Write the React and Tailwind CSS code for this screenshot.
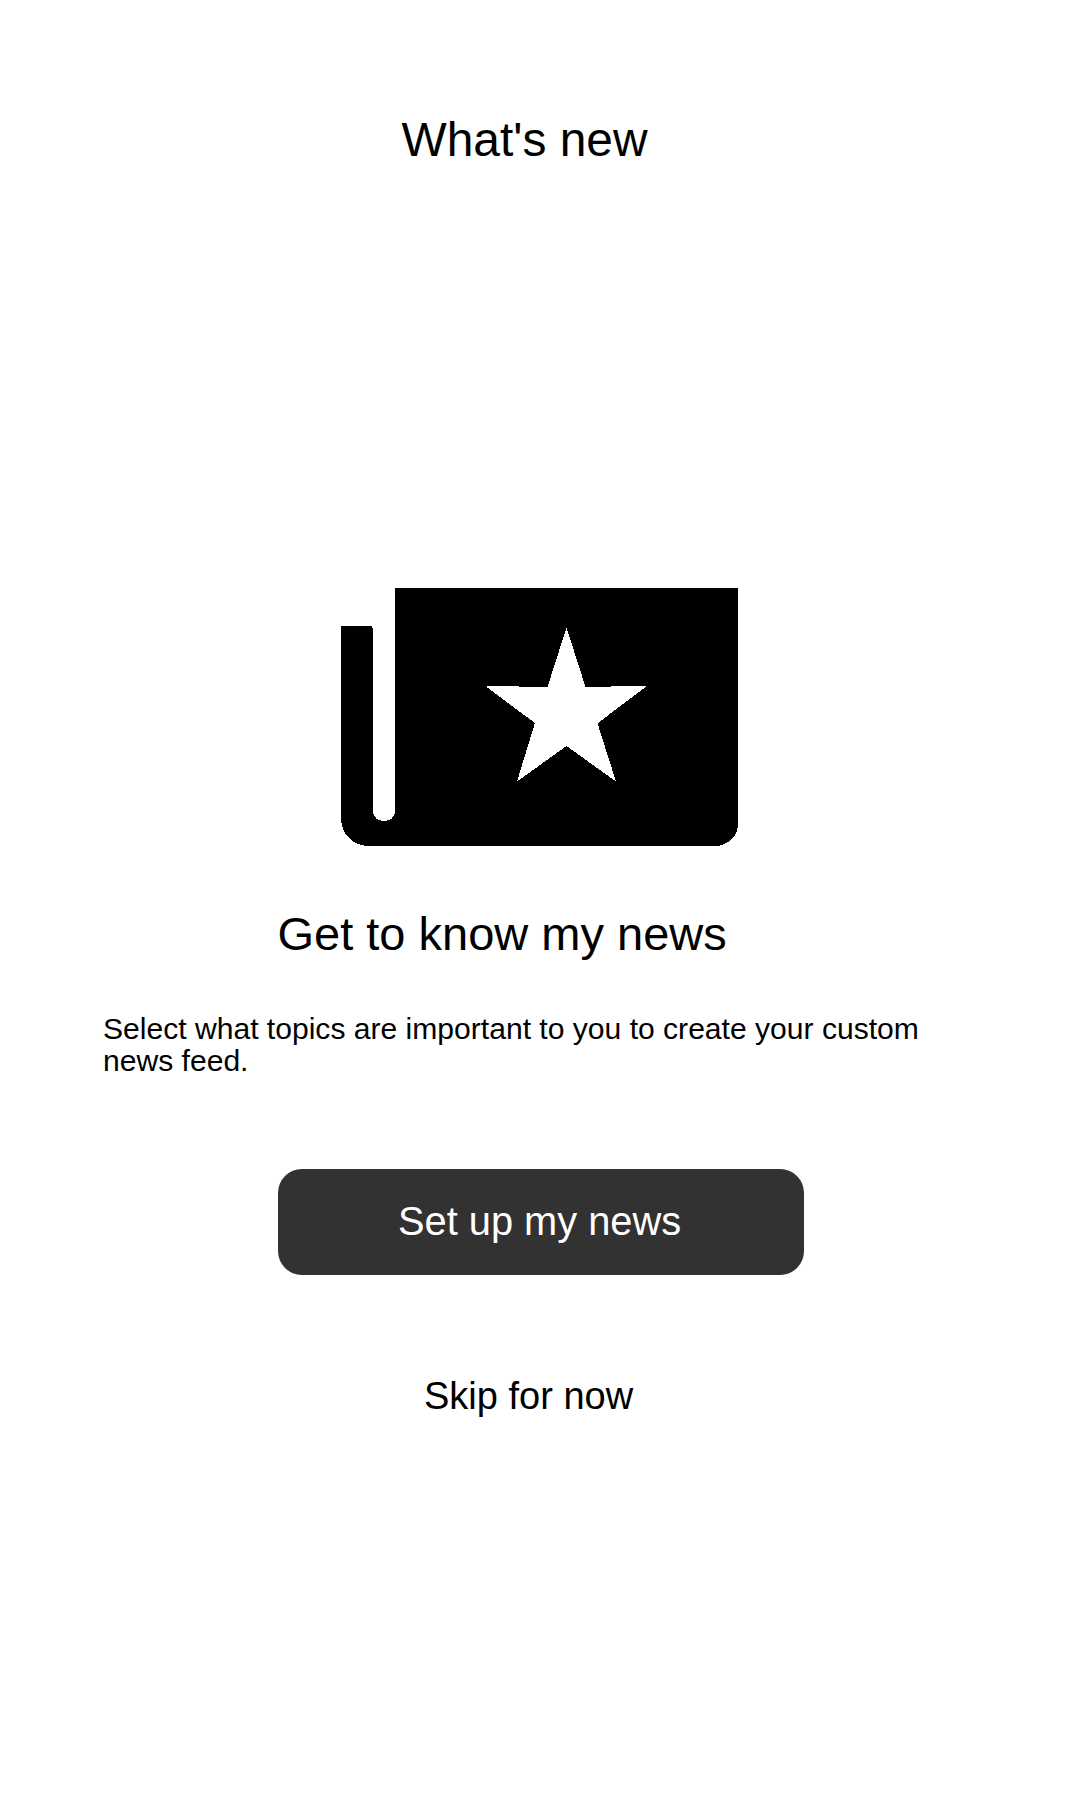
function NewsIcon() {
  return (
    <svg className="ml-[341px] mt-[420px] block h-[258px] w-[397px] shrink-0" viewBox="0 0 397 258" shapeRendering="crispEdges" aria-hidden="true">
      <path
        d="M0 38H31V40H32V224C32 229 37 233 43 233C49 233 54 229 54 224V0H397V236C397 248 387 258 374 258H28C12 258 0 246 0 230Z"
        fill="#000"
      />
      <path
        d="M225.5 39.5L244.5 99H270V98H304.7V99L256.5 135.3L275 193.5L225.5 158L176 193.5L193.9 135L145.6 99V98H178V99H206.5Z"
        fill="#fff"
      />
    </svg>
  );
}

export default function App() {
  return (
    <main className="flex h-[1800px] w-[1080px] flex-col items-start overflow-hidden bg-white font-['Liberation_Sans',Arial,sans-serif] text-black">
      <h1 className="ml-[401.5px] mt-[112px] whitespace-nowrap text-[47.9px] leading-[56px]">What's new</h1>
      <NewsIcon />
      <h2 className="ml-[277.5px] mt-[60px] whitespace-nowrap text-[47px] leading-[56px]">Get to know my news</h2>
      <p className="ml-[103px] mt-[51px] w-[850px] text-[30.08px] leading-[32px]">
        Select what topics are important to you to create your custom
        <br />
        news feed.
      </p>
      <button className="ml-[278px] mt-[92px] flex h-[106px] w-[526px] items-center rounded-3xl bg-[#323232] pb-[2px] pl-[120px] text-left text-[39.8px] leading-[48px] whitespace-nowrap text-white">
        Set up my news
      </button>
      <button className="ml-[424px] mt-[98px] whitespace-nowrap text-[38px] leading-[46px]">Skip for now</button>
    </main>
  );
}
